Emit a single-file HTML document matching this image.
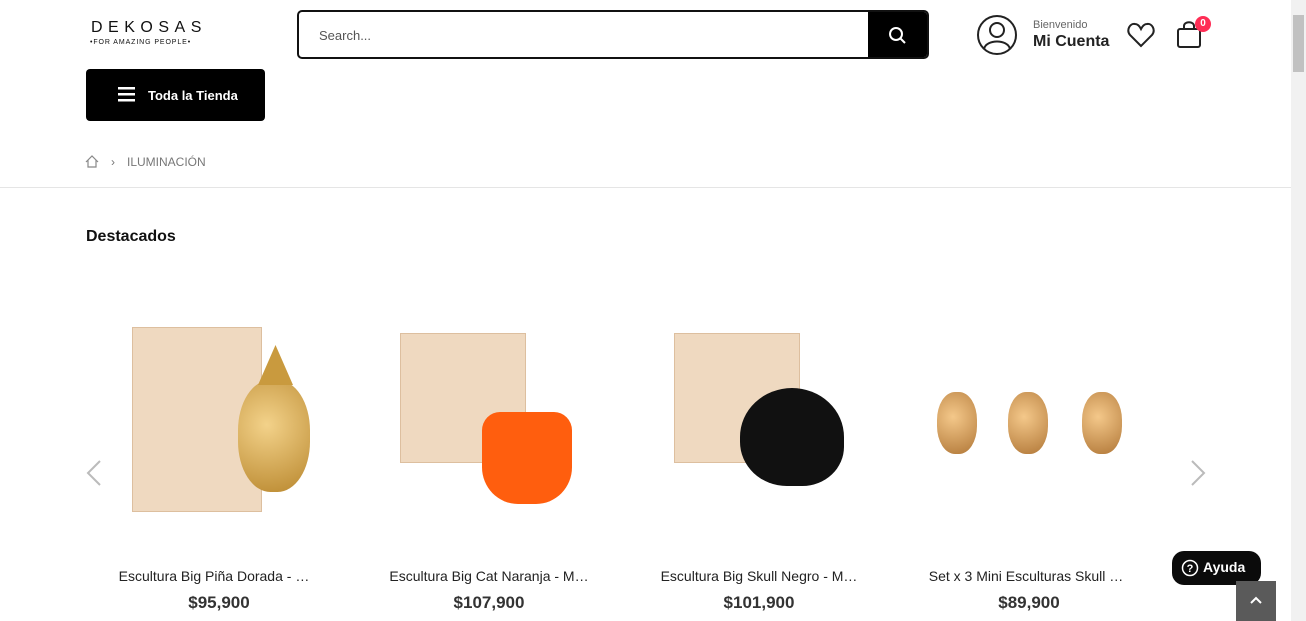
<!DOCTYPE html>
<html><head><meta charset="utf-8"><style>
*{margin:0;padding:0;box-sizing:border-box}
body{width:1306px;height:621px;overflow:hidden;background:#fff;font-family:"Liberation Sans",sans-serif;position:relative;color:#222}
.abs{position:absolute}
.logo1{left:91px;top:19px;font-size:16px;letter-spacing:5.5px;color:#111}
.logo2{left:90px;top:39px;font-size:7px;letter-spacing:0.9px;color:#111}
.search{left:297px;top:10px;width:632px;height:49px;border:2px solid #111;border-radius:5px;overflow:hidden}
.search span{position:absolute;left:20px;top:16px;font-size:13px;color:#555}
.search .btn{position:absolute;right:0;top:0;width:59px;height:100%;background:#000}
.menu{left:86px;top:69px;width:179px;height:52px;background:#000;border-radius:4px;color:#fff;font-weight:bold;font-size:13px}
.bc{left:127px;top:155px;font-size:12px;color:#777}
hr{position:absolute;left:0;top:187px;width:1291px;border:0;border-top:1px solid #e5e5e5}
.h2{left:86px;top:228px;font-size:16px;font-weight:bold;color:#111}
.name{font-size:14px;color:#222;width:220px;text-align:center;white-space:nowrap;top:568px}
.price{font-size:17px;font-weight:bold;color:#333;width:220px;text-align:center;top:593px}
.box{background:#efd9c0;border:1px solid #ddbf9f}
.sb{left:1291px;top:0;width:15px;height:621px;background:#f1f1f1}
</style></head><body>
<div class="abs logo1">DEKOSAS</div>
<div class="abs logo2">•FOR AMAZING PEOPLE•</div>
<div class="abs search"><span>Search...</span><div class="btn"><svg width="59" height="47" viewBox="0 0 59 47"><circle cx="28" cy="22" r="6" fill="none" stroke="#fff" stroke-width="2"/><line x1="32.5" y1="26.5" x2="37" y2="31" stroke="#fff" stroke-width="2"/></svg></div></div>
<svg class="abs" style="left:976px;top:14px" width="42" height="42" viewBox="0 0 42 42"><circle cx="21" cy="21" r="19" fill="none" stroke="#222" stroke-width="2"/><circle cx="21" cy="16" r="7" fill="none" stroke="#222" stroke-width="2"/><path d="M8 35 C10 25 32 25 34 35" fill="none" stroke="#222" stroke-width="2"/></svg>
<div class="abs" style="left:1033px;top:19px;font-size:11px;color:#666">Bienvenido</div>
<div class="abs" style="left:1033px;top:33px;font-size:16px;font-weight:bold;color:#222">Mi Cuenta</div>
<svg class="abs" style="left:1127px;top:22px" width="28" height="26" viewBox="0 0 28 26"><path d="M14 24 L3 13 C-1 8 3 1 8 2 C11 2 13 5 14 7 C15 5 17 2 20 2 C25 1 29 8 25 13 Z" fill="none" stroke="#222" stroke-width="2"/></svg>
<svg class="abs" style="left:1175px;top:20px" width="30" height="30" viewBox="0 0 30 30"><rect x="3" y="9" width="22" height="18" rx="2" fill="none" stroke="#222" stroke-width="2"/><path d="M9 9 V6 C9 1 19 1 19 6 V9" fill="none" stroke="#222" stroke-width="2"/></svg>
<div class="abs" style="left:1195px;top:16px;width:16px;height:16px;border-radius:8px;background:#ff2d55;color:#fff;font-size:10px;font-weight:bold;text-align:center;line-height:16px">0</div>
<div class="abs menu"><svg class="abs" style="left:32px;top:18px" width="17" height="15"><rect y="0" width="17" height="2.5" fill="#fff"/><rect y="6" width="17" height="2.5" fill="#fff"/><rect y="12" width="17" height="2.5" fill="#fff"/></svg><span class="abs" style="left:62px;top:19px">Toda la Tienda</span></div>
<svg class="abs" style="left:85px;top:155px" width="14" height="13" viewBox="0 0 14 13"><path d="M1 7 L7 1 L13 7 M3 5 V12 H11 V5" fill="none" stroke="#888" stroke-width="1.2"/></svg>
<div class="abs bc" style="left:111px">›</div>
<div class="abs bc">ILUMINACIÓN</div>
<hr>
<div class="abs h2">Destacados</div>
<svg class="abs" style="left:86px;top:460px" width="16" height="26"><path d="M14 1 L2 13 L14 25" fill="none" stroke="#bbb" stroke-width="2"/></svg>
<svg class="abs" style="left:1190px;top:460px" width="16" height="26"><path d="M2 1 L14 13 L2 25" fill="none" stroke="#bbb" stroke-width="2"/></svg>
<div class="abs box" style="left:132px;top:327px;width:130px;height:185px"></div>
<div class="abs" style="left:238px;top:380px;width:72px;height:112px;border-radius:45%;background:radial-gradient(circle at 40% 40%,#f3d28a,#b8862c)"></div>
<div class="abs" style="left:258px;top:345px;width:35px;height:40px;background:#c99a3e;clip-path:polygon(50% 0,100% 100%,0 100%)"></div>
<div class="abs box" style="left:400px;top:333px;width:126px;height:130px"></div>
<div class="abs" style="left:482px;top:412px;width:90px;height:92px;background:#ff5e0e;border-radius:20% 20% 40% 40%"></div>
<div class="abs box" style="left:674px;top:333px;width:126px;height:130px"></div>
<div class="abs" style="left:740px;top:388px;width:104px;height:98px;background:#111;border-radius:50% 50% 40% 45%"></div>
<div class="abs" style="left:937px;top:392px;width:40px;height:62px;border-radius:45%;background:radial-gradient(circle at 40% 40%,#f4c88a,#b07636)"></div>
<div class="abs" style="left:1008px;top:392px;width:40px;height:62px;border-radius:45%;background:radial-gradient(circle at 40% 40%,#f4c88a,#b07636)"></div>
<div class="abs" style="left:1082px;top:392px;width:40px;height:62px;border-radius:45%;background:radial-gradient(circle at 40% 40%,#f4c88a,#b07636)"></div>
<div class="abs name" style="left:104px">Escultura Big Piña Dorada - …</div>
<div class="abs name" style="left:379px">Escultura Big Cat Naranja - M…</div>
<div class="abs name" style="left:649px">Escultura Big Skull Negro - M…</div>
<div class="abs name" style="left:916px">Set x 3 Mini Esculturas Skull …</div>
<div class="abs price" style="left:109px">$95,900</div>
<div class="abs price" style="left:379px">$107,900</div>
<div class="abs price" style="left:649px">$101,900</div>
<div class="abs price" style="left:919px">$89,900</div>
<div class="abs" style="left:1172px;top:551px;width:89px;height:34px;background:#0b0b0b;border-radius:12px;color:#fff;font-weight:bold;font-size:14px"><svg class="abs" style="left:9px;top:8px" width="18" height="18"><circle cx="9" cy="9" r="7.5" fill="none" stroke="#fff" stroke-width="1.5"/><text x="9" y="13" font-size="11" fill="#fff" text-anchor="middle" font-family="Liberation Sans">?</text></svg><span class="abs" style="left:31px;top:8px">Ayuda</span></div>
<div class="abs" style="left:1236px;top:581px;width:40px;height:40px;background:#5a5a5a"><svg class="abs" style="left:14px;top:15px" width="12" height="8"><path d="M1 7 L6 2 L11 7" fill="none" stroke="#fff" stroke-width="2"/></svg></div>
<div class="abs sb"><div class="abs" style="left:2px;top:15px;width:11px;height:57px;background:#c1c1c1"></div></div>
</body></html>
